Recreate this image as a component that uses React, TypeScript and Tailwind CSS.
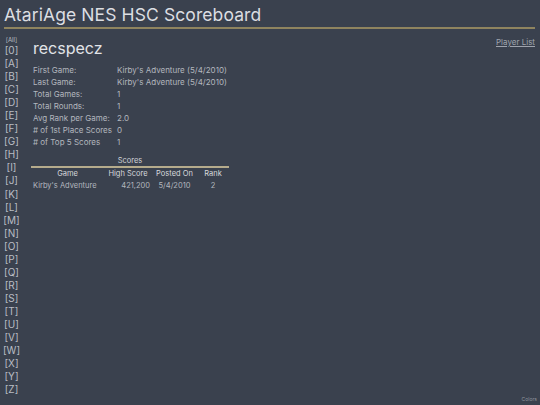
import React from "react";

const letters = ["0", "A", "B", "C", "D", "E", "F", "G", "H", "I", "J", "K", "L", "M", "N", "O", "P", "Q", "R", "S", "T", "U", "V", "W", "X", "Y", "Z"];

const stats: [string, string][] = [
  ["First Game:", "Kirby's Adventure (5/4/2010)"],
  ["Last Game:", "Kirby's Adventure (5/4/2010)"],
  ["Total Games:", "1"],
  ["Total Rounds:", "1"],
  ["Avg Rank per Game:", "2.0"],
  ["# of 1st Place Scores", "0"],
  ["# of Top 5 Scores", "1"],
];

export default function App() {
  return (
    <div
      className="w-[540px] h-[405px] bg-[#3a414e] text-[#c9ccd2] overflow-hidden relative"
      style={{ fontFamily: "Inter, 'Open Sans', sans-serif" }}
    >
      <header className="px-[4px] pt-[3px]">
        <h1 className="text-[17.5px] leading-[24px] text-[#dcdee2] tracking-[0.1px]">AtariAge NES HSC Scoreboard</h1>
        <div className="h-[2px] bg-[#8f845f] mr-[1px]" />
      </header>

      <div className="flex">
        <nav className="w-[23px] flex flex-col items-center pt-[7px] text-[#b9bdc4]">
          <a className="text-[6px] leading-[8px]">[All]</a>
          {letters.map((l) => (
            <a key={l} className="text-[10px] leading-[13.05px]">[{l}]</a>
          ))}
        </nav>

        <main className="flex-1 pl-[10px] pr-[5px] pt-[4px]">
          <div className="flex justify-between items-start">
            <h2 className="text-[16px] leading-[22px] text-[#e2e4e8] mt-[4px]">recspecz</h2>
            <a className="text-[8px] leading-[10px] text-[#9fa4ad] underline mt-[4px]">Player List</a>
          </div>

          <table className="mt-[5px] text-[8px] text-[#b3b7be] border-separate border-spacing-0">
            <tbody>
              {stats.map(([k, v]) => (
                <tr key={k} className="h-[11.5px]">
                  <td className="w-[84px] p-0 whitespace-nowrap">{k}</td>
                  <td className="p-0 whitespace-nowrap">{v}</td>
                </tr>
              ))}
            </tbody>
          </table>

          <div className="w-[198px] -ml-[2px] mt-[8px] text-[7.5px]">
            <div className="text-center text-[#d0d3d8] leading-[10px]">Scores</div>
            <div className="h-[2px] bg-[#b5ab8c]" />
            <div className="grid grid-cols-[73px_48px_45px_32px] text-[#d7d9dd] leading-[12px] text-center">
              <div>Game</div>
              <div>High Score</div>
              <div>Posted On</div>
              <div>Rank</div>
            </div>
            <div className="grid grid-cols-[73px_48px_45px_32px] text-[#b3b7be] leading-[12px]">
              <div className="pl-[2px] whitespace-nowrap">Kirby's Adventure</div>
              <div className="text-right pr-[2px]">421,200</div>
              <div className="text-center">5/4/2010</div>
              <div className="text-center">2</div>
            </div>
          </div>
        </main>
      </div>

      <div className="absolute right-[3px] bottom-[2px] text-[5px] text-[#8f949c]">Colors</div>
    </div>
  );
}
